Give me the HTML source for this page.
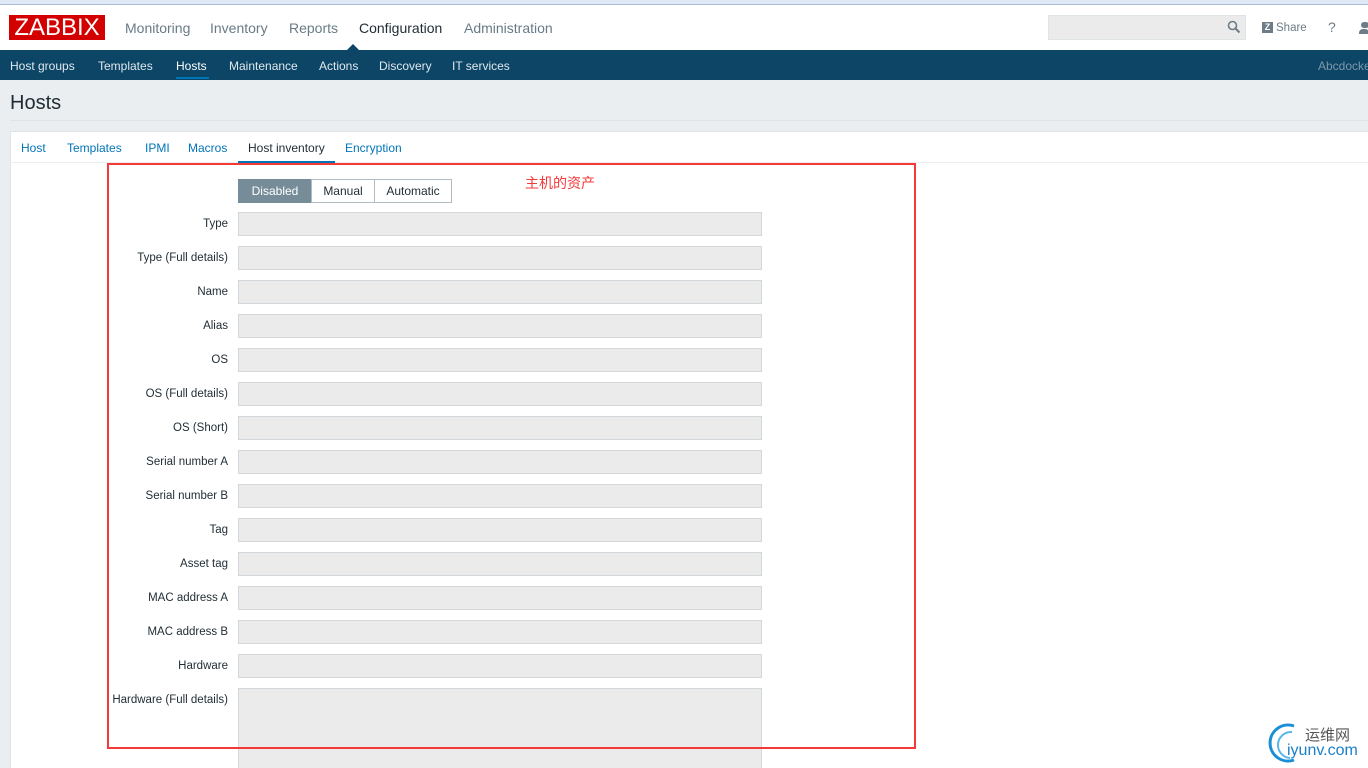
<!DOCTYPE html>
<html><head><meta charset="utf-8"><style>
*{box-sizing:border-box;margin:0;padding:0}
html{overflow:hidden;width:1368px;height:768px}
body{width:1368px;height:768px;overflow:hidden;background:#ebeef0;font-family:"Liberation Sans","Noto Sans CJK SC",sans-serif;position:relative;font-size:12px;color:#1f2c33}
.top{position:absolute;left:0;top:0;width:1368px;height:5px;background:#dfe9f6;border-bottom:1px solid #a9bdd3}
.hdr{position:absolute;top:5px;left:0;width:1368px;height:45px;background:#fff}
.logo{position:absolute;left:9px;top:10px;width:96px;height:25px;background:#d40000;color:#fff;font-size:24px;line-height:25px;text-align:center;letter-spacing:0}
.mm{position:absolute;top:15px;font-size:14px;color:#687b87}
.nav{position:absolute;top:50px;left:0;width:1368px;height:30px;background:#0c4566}
.nav span{position:absolute;top:9px;font-size:12px;color:#e0e8ee}
.ttl{position:absolute;left:10px;top:92px;font-size:20px;color:#1f2c33}
.hl{position:absolute;left:10px;top:120px;width:1358px;height:1px;background:#dfe4e7}
.panel{position:absolute;left:10px;top:131px;width:1358px;height:640px;background:#fff;border-top:1px solid #dfe4e7;border-left:1px solid #dfe4e7}
.tabs{position:absolute;left:10px;top:132px;width:1358px;height:31px;border-bottom:1px solid #ebeef0}
.tab{position:absolute;top:9px;font-size:12px;color:#0275b8}
.lbl{position:absolute;right:1140px;font-size:11.5px;color:#1f2c33;text-align:right;white-space:nowrap}
.inp{position:absolute;left:238px;width:524px;height:24px;background:#ebebeb;border:1px solid #d2d8dc}
.seg{position:absolute;top:179px;height:24px;border:1px solid #b1bcc2;font-size:12px;line-height:22px;text-align:center;background:#fff}
.red{position:absolute;left:107px;top:163px;width:809px;height:586px;border:2px solid #f53838}
</style></head><body>
<div class="top"></div>
<div class="hdr">
<div class="logo">ZABBIX</div>
<span class="mm" style="left:125px">Monitoring</span>
<span class="mm" style="left:210px">Inventory</span>
<span class="mm" style="left:289px">Reports</span>
<span class="mm" style="left:359px;color:#1f2c33">Configuration</span>
<span class="mm" style="left:464px">Administration</span>
<div style="position:absolute;left:1048px;top:10px;width:198px;height:25px;background:#ebebeb;border:1px solid #dfe4e7"></div>
<svg style="position:absolute;left:1227px;top:15px" width="14" height="14" viewBox="0 0 14 14"><circle cx="5.5" cy="5.5" r="4" fill="none" stroke="#6d7c86" stroke-width="1.6"/><path d="M8.5 8.5L12.5 12.5" stroke="#6d7c86" stroke-width="2"/></svg>
<div style="position:absolute;left:1262px;top:17px;width:11px;height:11px;background:#6d7c86;color:#fff;font-size:9px;font-weight:bold;line-height:11px;text-align:center">Z</div>
<span style="position:absolute;left:1276px;top:17px;font-size:11.5px;color:#6d7c86">Share</span>
<span style="position:absolute;left:1328px;top:14px;font-size:14px;color:#6d7c86">?</span>
<div style="position:absolute;left:1361px;top:17px;width:8px;height:6px;border-radius:4px;background:#6d7c86"></div>
<div style="position:absolute;left:1359px;top:24px;width:10px;height:5px;border-radius:4px 4px 0 0;background:#6d7c86"></div>
</div>
<div class="nav">
<span style="left:10px">Host groups</span>
<span style="left:98px">Templates</span>
<span style="left:176px;color:#fff">Hosts</span>
<span style="left:229px">Maintenance</span>
<span style="left:319px">Actions</span>
<span style="left:379px">Discovery</span>
<span style="left:452px">IT services</span>
<span style="left:1318px;color:#7e98aa">Abcdocker</span>
<div style="position:absolute;left:347px;top:-6px;width:0;height:0;border-left:6px solid transparent;border-right:6px solid transparent;border-bottom:6px solid #0c4566"></div>
</div>
<div style="position:absolute;left:176px;top:77px;width:33px;height:2px;background:#0275b8"></div>
<div class="ttl">Hosts</div>
<div class="hl"></div>
<div class="panel"></div>
<div class="tabs">
<span class="tab" style="left:11px">Host</span>
<span class="tab" style="left:57px">Templates</span>
<span class="tab" style="left:135px">IPMI</span>
<span class="tab" style="left:178px">Macros</span>
<span class="tab" style="left:238px;color:#1f2c33">Host inventory</span>
<div style="position:absolute;left:228px;top:29px;width:97px;height:2px;background:#0275b8"></div>
<span class="tab" style="left:335px">Encryption</span>
</div>
<div class="seg" style="left:238px;width:74px;background:#768d99;border-color:#768d99;color:#fff">Disabled</div>
<div class="seg" style="left:311px;width:64px">Manual</div>
<div class="seg" style="left:374px;width:78px">Automatic</div>
<div class="lbl" style="top:218px">Type</div><div class="inp" style="top:212px"></div>
<div class="lbl" style="top:252px">Type (Full details)</div><div class="inp" style="top:246px"></div>
<div class="lbl" style="top:286px">Name</div><div class="inp" style="top:280px"></div>
<div class="lbl" style="top:320px">Alias</div><div class="inp" style="top:314px"></div>
<div class="lbl" style="top:354px">OS</div><div class="inp" style="top:348px"></div>
<div class="lbl" style="top:388px">OS (Full details)</div><div class="inp" style="top:382px"></div>
<div class="lbl" style="top:422px">OS (Short)</div><div class="inp" style="top:416px"></div>
<div class="lbl" style="top:456px">Serial number A</div><div class="inp" style="top:450px"></div>
<div class="lbl" style="top:490px">Serial number B</div><div class="inp" style="top:484px"></div>
<div class="lbl" style="top:524px">Tag</div><div class="inp" style="top:518px"></div>
<div class="lbl" style="top:558px">Asset tag</div><div class="inp" style="top:552px"></div>
<div class="lbl" style="top:592px">MAC address A</div><div class="inp" style="top:586px"></div>
<div class="lbl" style="top:626px">MAC address B</div><div class="inp" style="top:620px"></div>
<div class="lbl" style="top:660px">Hardware</div><div class="inp" style="top:654px"></div>
<div class="lbl" style="top:694px">Hardware (Full details)</div><div class="inp" style="top:688px;height:80px;border-bottom:none"></div>
<div class="red"></div>
<div style="position:absolute;left:525px;top:173px;font-size:14px;color:#f53838">主机的资产</div>
<svg style="position:absolute;left:1264px;top:720px" width="40" height="44" viewBox="0 0 40 44"><path d="M30 6 A18 18 0 1 0 30 40" fill="none" stroke="#1a8fd6" stroke-width="3"/><path d="M28 12 A12 12 0 1 0 26 38" fill="none" stroke="#59b6ea" stroke-width="2"/></svg>
<span style="position:absolute;left:1305px;top:724px;font-size:15px;color:#555">运维网</span>
<span style="position:absolute;left:1287px;top:742px;font-size:16px;color:#1a7fc8">iyunv.com</span>
</body></html>
